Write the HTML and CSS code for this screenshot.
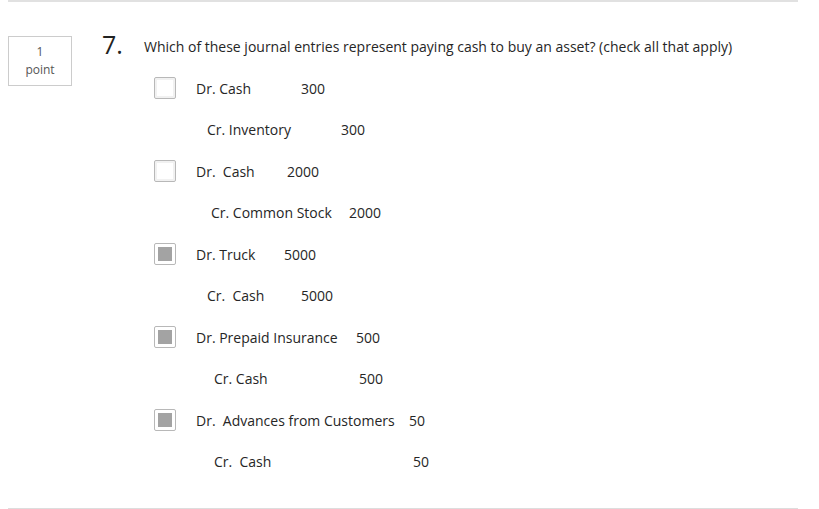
FILE: index.html
```html
<!DOCTYPE html>
<html lang="en">
<head>
<meta charset="utf-8">
<title>Question 7</title>
<link rel="stylesheet" href="styles.css">
</head>
<body>
<div class="question">
  <div class="points">
    <div>1</div>
    <div>point</div>
  </div>
  <div class="content">
    <div class="qnum">7.</div>
    <div class="body">
      <div class="prompt">Which of these journal entries represent paying cash to buy an asset? (check all that apply)</div>
      <div class="options">
        <div class="option">
          <span class="box"></span>
          <div class="entry">
            <div class="line"><span class="acct" style="width:105px">Dr. Cash</span><span class="amt">300</span></div>
            <div class="line cr" style="padding-left:11px"><span class="acct" style="width:134px">Cr. Inventory</span><span class="amt">300</span></div>
          </div>
        </div>
        <div class="option">
          <span class="box"></span>
          <div class="entry">
            <div class="line"><span class="acct" style="width:91px">Dr.  Cash</span><span class="amt">2000</span></div>
            <div class="line cr" style="padding-left:15px"><span class="acct" style="width:138px">Cr. Common Stock</span><span class="amt">2000</span></div>
          </div>
        </div>
        <div class="option">
          <span class="box checked"></span>
          <div class="entry">
            <div class="line"><span class="acct" style="width:88px">Dr. Truck</span><span class="amt">5000</span></div>
            <div class="line cr" style="padding-left:11px"><span class="acct" style="width:94px">Cr.  Cash</span><span class="amt">5000</span></div>
          </div>
        </div>
        <div class="option">
          <span class="box checked"></span>
          <div class="entry">
            <div class="line"><span class="acct" style="width:160px">Dr. Prepaid Insurance</span><span class="amt">500</span></div>
            <div class="line cr" style="padding-left:18px"><span class="acct" style="width:145px">Cr. Cash</span><span class="amt">500</span></div>
          </div>
        </div>
        <div class="option">
          <span class="box checked"></span>
          <div class="entry">
            <div class="line"><span class="acct" style="width:213px">Dr.  Advances from Customers</span><span class="amt">50</span></div>
            <div class="line cr" style="padding-left:18px"><span class="acct" style="width:199px">Cr.  Cash</span><span class="amt">50</span></div>
          </div>
        </div>
      </div>
    </div>
  </div>
</div>
</body>
</html>
```

FILE: styles.css
```css
* { box-sizing: border-box; }

html, body {
  margin: 0;
  padding: 0;
  background: #ffffff;
}

body {
  font-family: "Open Sans", "DejaVu Sans", sans-serif;
  color: #262626;
  font-size: 14px;
}

.question {
  margin-left: 8px;
  width: 790px;
  border-top: 2px solid #e1e1e1;
  border-bottom: 1px solid #dddddd;
  padding-top: 34px;
  padding-bottom: 35px;
  display: flex;
  align-items: flex-start;
}

.points {
  width: 64px;
  height: 50px;
  border: 1px solid #cccccc;
  padding: 6px 0;
  text-align: center;
  font-size: 12px;
  line-height: 18px;
  color: #555555;
}

.content {
  margin-left: 30px;
  padding-top: 1px;
  display: flex;
  align-items: flex-start;
}

.qnum {
  width: 42px;
  font-size: 25px;
  line-height: 20px;
  margin-top: -3px;
  color: #222222;
}

.prompt {
  line-height: 20px;
}

.options {
  padding-left: 10px;
  padding-top: 20px;
  display: flex;
  flex-direction: column;
  gap: 19px;
}

.option {
  display: flex;
  align-items: flex-start;
  gap: 20px;
}

.box {
  width: 22px;
  height: 22px;
  flex: none;
  border: 1px solid #b8b8b8;
  border-radius: 2px;
  background: #ffffff;
  box-shadow: inset 0 0 0 2px #f1f1f1;
  position: relative;
}

.box.checked {
  box-shadow: none;
}

.box.checked::after {
  content: "";
  position: absolute;
  left: 3px;
  top: 3px;
  width: 14px;
  height: 14px;
  background: #a3a3a3;
}

.entry {
  padding-top: 1px;
}

.line {
  display: flex;
  line-height: 22px;
  white-space: pre;
}

.line.cr {
  margin-top: 19px;
}

.acct {
  flex: none;
}
```
